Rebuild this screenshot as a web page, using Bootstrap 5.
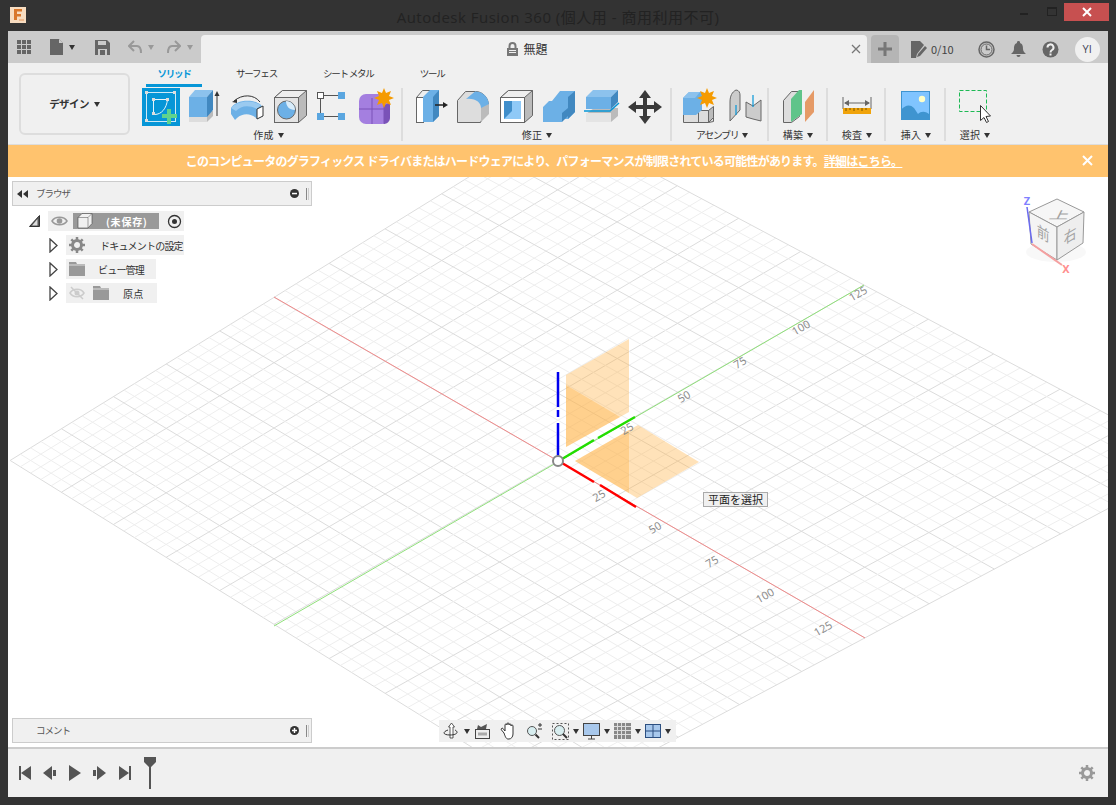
<!DOCTYPE html>
<html lang="ja">
<head>
  <meta charset="UTF-8">
  <meta name="viewport" content="width=device-width, initial-scale=1">
  <title>Autodesk Fusion 360</title>
  <link href="https://cdn.jsdelivr.net/npm/bootstrap@5.3.0/dist/css/bootstrap.min.css" rel="stylesheet">
  <style>
    html, body { height: 100%; overflow: hidden; }
    body { background: #333; font-family: "Noto Sans CJK JP", "Noto Sans", sans-serif; font-size: 10px; color: #333; }
    svg { display: block; flex: none; }
    .win { height: 805px; padding: 0 8px 8px; display: flex; flex-direction: column; }
    .titlebar { height: 31px; margin: 0 -8px; position: relative; flex: none; }
    .app-ico { position: absolute; left: 10px; top: 7px; }
    .win-title { padding-top: 5px; text-align: center; font-family: "Open Sans", "Noto Sans CJK JP", sans-serif; font-size: 15px; line-height: 24px; color: #222; letter-spacing: .5px; }
    .win-btns { position: absolute; right: 7px; top: 3px; }
    .win-close { width: 45px; height: 18px; background: #c75050; display: flex; align-items: center; justify-content: center; }
    .tabbar { height: 32px; background: #cbcbcb; flex: none; }
    .doc-tab { width: 666px; height: 28px; margin-top: 4px; margin-left: 193px; padding-right: 14px; background: #f0f0f0; border-radius: 4px 4px 0 0; position: relative; font-size: 12px; }
    .tab-x { position: absolute; right: 6px; top: 7px; }
    .plus-tab { width: 28px; height: 28px; margin: 4px 0 0 4px; background: #b5b5b5; border-radius: 4px 4px 0 0; }
    .left-tools { position: absolute; left: 9px; top: 8px; }
    .lt-caret1 { margin-left: 5px; margin-right: 20px; }
    .lt-undo { margin-left: 18px; }
    .lt-caret2 { margin-left: 6px; }
    .lt-redo { margin-left: 13px; }
    .right-tools { margin-left: 12px; margin-top: 4px; font-size: 11px; color: #444; }
    .caret-d { width: 0; height: 0; border-left: 3.5px solid transparent; border-right: 3.5px solid transparent; border-top: 5px solid #333; display: inline-block; }
    .caret-g { border-top-color: #999; }
    .avatar { width: 25px; height: 25px; border-radius: 50%; background: #f0f0f0; font-size: 11px; color: #445; font-family: "Open Sans", sans-serif; }
    .ribbon { height: 82px; background: #f0f0f0; border-bottom: 1px solid #ddd; padding-left: 11px; flex: none; }
    .design-btn { width: 111px; height: 62px; margin-top: 10px; border: 2px solid #ddd; border-radius: 6px; font-size: 10.5px; font-weight: 700; letter-spacing: -.6px; gap: 5px; }
    .tool-area { margin-left: 12px; }
    .tab-row { height: 25px; padding-left: 4px; font-size: 9.5px; letter-spacing: -1.2px; }
    .rtab { margin-right: 46px; padding-top: 3px; height: 24px; white-space: pre; }
    .rtab-on { width: 56px; margin-right: 34px; text-align: center; color: #0696d7; font-weight: 700; border-bottom: 3px solid #0696d7; }
    .rgroup { height: 53px; display: flex; flex-direction: column; align-items: center; border-right: 2px solid #ddd; }
    .rgroup.last { border-right: 0; }
    .g1 { padding-right: 6px; width: 261px; }
    .g2 { padding: 0 6px 0 7px; width: 269px; }
    .g3 { padding: 0 3px 0 8px; width: 97px; }
    .g4 { padding: 0 9px 0 10px; width: 59px; }
    .g5 { padding: 0 8px 0 10px; width: 58px; }
    .g6 { padding: 0 9px 0 11px; width: 60px; }
    .g7 { padding-left: 10px; width: 48px; }
    .icons-row { display: flex; height: 38px; gap: 5px; }
    .g3 .icons-row { gap: 8px; }
    .glabel { margin-top: 2px; font-size: 10px; line-height: 14px; gap: 4px; letter-spacing: .2px; white-space: nowrap; }
    .kana { letter-spacing: -1.4px; }
    .banner { height: 32px; background: #ffc36e; color: #fff; font-weight: 700; font-size: 12px; flex: none; position: relative; letter-spacing: -.78px; padding-right: 28px; }
    .banner a { color: #fff; }
    .banner-x { position: absolute; right: 15px; top: 10px; }
    .stage { height: 570px; background: #fff; position: relative; overflow: hidden; flex: none; }
    .stage-svg { position: absolute; left: 0; top: 0; }
    .panel { position: absolute; left: 4px; width: 300px; height: 25px; background: #f0f0f0; border: 1px solid #ccc; padding: 0 2px 0 23px; color: #555; font-size: 9.5px; letter-spacing: -1px; }
    .panel-top { top: 4px; }
    .panel-bottom { bottom: 4px; }
    .panel-rew { position: absolute; left: 4px; top: 8px; }
    .grip { width: 3px; height: 12px; border-left: 1px solid #888; border-right: 1px solid #ccc; margin-left: 7px; }
    .tree { position: absolute; left: 21px; top: 34px; gap: 4px; }
    .tree-row { height: 20px; display: flex; align-items: center; }
    .row-bg { background: #f0f0f0; height: 20px; display: flex; align-items: center; font-size: 10px; letter-spacing: -.8px; color: #333; }
    .bg-1 { width: 136px; margin-left: 8px; padding-left: 3px; }
    .bg-2 { width: 118px; margin-left: 8px; padding-left: 3px; }
    .bg-3 { width: 90px; margin-left: 8px; padding-left: 3px; }
    .bg-4 { width: 91px; margin-left: 8px; padding-left: 3px; }
    .sel-bar { width: 86px; height: 16px; background: #999; margin-left: 5px; color: #fff; font-weight: 700; display: flex; align-items: center; letter-spacing: .8px; }
    .lbl-doc { margin-left: 15px; white-space: nowrap; }
    .lbl-view { margin-left: 13px; white-space: nowrap; }
    .lbl-orig { margin-left: 14px; letter-spacing: .3px; }
    .nav-bar { position: absolute; left: 431px; bottom: 5px; width: 237px; height: 22px; background: #f0f0f0; padding-left: 4px; gap: 4px; }
    .nav-wide { margin-left: 5px; }
    .plane-tip { position: absolute; left: 695px; top: 315px; width: 65px; height: 15px; background: #f0f0f0; border: 1px solid #aaa; font-size: 11px; line-height: 13px; text-align: center; color: #222; }
    .timeline { height: 50px; background: #f0f0f0; border-top: 2px solid #ccc; padding: 0 13px 0 11px; flex: none; }
    .tl-btn { margin-left: 12px; }
    .tl-btn-w { margin-left: 13px; }
  </style>
</head>
<body>
<div class="win">
  <div class="titlebar">
    <svg class="app-ico" width="16" height="16" viewBox="0 0 16 16"><rect width="16" height="16" fill="#f7dcc0"/><path d="M4 2h8v2.500H7V7h4v2.500H7V13H4z" fill="#d9772b"/><rect x="9" y="12" width="5" height="2" fill="#eeb98c"/></svg>
    <div class="win-title">Autodesk Fusion 360 (個人用 - 商用利用不可)</div>
    <div class="win-btns d-flex align-items-start">
      <svg width="44" height="18" viewBox="0 0 44 18"><rect x="0" y="10" width="8" height="2" fill="#222"/><rect x="27.500" y="4.500" width="9" height="8" fill="none" stroke="#222"/><rect x="27" y="4" width="10" height="2" fill="#222"/></svg>
      <div class="win-close"><svg width="10" height="10" viewBox="0 0 10 10"><path d="M1 1l8 8M9 1l-8 8" stroke="#fff" stroke-width="2"/></svg></div>
    </div>
  </div>

  <div class="tabbar d-flex position-relative">
    <div class="left-tools d-flex align-items-center">
      <svg width="33" height="16" viewBox="0 0 33 16" fill="#666"><path d="M0 1h4v4H0zM5 1h4v4H5zM10 1h4v4h-4zM0 6h4v4H0zM5 6h4v4H5zM10 6h4v4h-4zM0 11h4v4H0zM5 11h4v4H5zM10 11h4v4h-4z"/></svg>
      <svg width="14" height="16" viewBox="0 0 14 16"><path d="M0 0h9l4 4v12H0z" fill="#666"/><path d="M9 0v4h4z" fill="#cbcbcb"/></svg>
      <span class="caret-d lt-caret1"></span>
      <svg width="15" height="15" viewBox="0 0 15 15"><path d="M0 0h12l3 3v12H0z" fill="#666"/><rect x="3" y="1" width="8" height="4" fill="#cbcbcb"/><rect x="3" y="9" width="9" height="6" fill="#cbcbcb"/><rect x="5" y="10" width="5" height="5" fill="#666"/></svg>
      <svg class="lt-undo" width="14" height="14" viewBox="0 0 14 14"><path d="M6 1L1 6l5 5M1 6h8c3 0 4 3 4 7" fill="none" stroke="#999" stroke-width="2"/></svg>
      <span class="caret-d caret-g lt-caret2"></span>
      <svg class="lt-redo" width="14" height="14" viewBox="0 0 14 14"><path d="M8 1l5 5-5 5M13 6H5c-3 0-4 3-4 7" fill="none" stroke="#999" stroke-width="2"/></svg>
      <span class="caret-d caret-g lt-caret2"></span>
    </div>
    <div class="doc-tab d-flex align-items-center justify-content-center">
      <svg class="me-1" width="13" height="14" viewBox="0 0 13 14"><path d="M3.500 6V4a3 3 0 0 1 6 0v2" fill="none" stroke="#777" stroke-width="2"/><rect x="1" y="6" width="11" height="8" fill="#777"/><path d="M3 8.500h7M3 10.500h7" stroke="#f0f0f0"/></svg>
      <span>無題</span>
      <svg class="tab-x" width="10" height="14" viewBox="0 0 10 14"><path d="M1 3l8 8M9 3l-8 8" stroke="#777" stroke-width="1.300"/></svg>
    </div>
    <div class="plus-tab d-flex align-items-center justify-content-center">
      <svg width="14" height="14" viewBox="0 0 14 14"><path d="M7 0v14M0 7h14" stroke="#777" stroke-width="3"/></svg>
    </div>
    <div class="right-tools d-flex align-items-center">
      <svg width="16" height="17" viewBox="0 0 16 17"><path d="M0 0h9l4 4-7 9-1 4H0z" fill="#666"/><path d="M7 13l7-8 2 2-7 8-3 1z" fill="#666"/></svg>
      <span class="ms-1">0/10</span>
      <svg class="ms-4" width="17" height="17" viewBox="0 0 17 17"><circle cx="8.500" cy="8.500" r="7.500" fill="none" stroke="#666" stroke-width="1.500"/><circle cx="8.500" cy="8.500" r="5.500" fill="none" stroke="#666"/><path d="M8.500 4.500v4h3.500" fill="none" stroke="#666" stroke-width="1.500"/></svg>
      <svg class="ms-3" width="15" height="17" viewBox="0 0 15 17"><path d="M7.500 0a1.500 1.500 0 0 1 1.500 2c3 1 3 4 3 6s1 3 3 5H0c2-2 3-3 3-5s0-5 3-6a1.500 1.500 0 0 1 1.500-2zM5.500 14h4a2 2 0 0 1-4 0z" fill="#666"/></svg>
      <svg class="ms-3" width="17" height="17" viewBox="0 0 17 17"><circle cx="8.500" cy="8.500" r="8" fill="#666"/><path d="M5.500 6.500a3 3 0 1 1 4.500 2.500c-1 .6-1.500 1-1.500 2.500" fill="none" stroke="#f0f0f0" stroke-width="2"/><rect x="7.500" y="12.500" width="2" height="2" fill="#f0f0f0"/></svg>
      <div class="avatar ms-3 d-flex align-items-center justify-content-center">YI</div>
    </div>
  </div>

  <div class="ribbon d-flex">
    <div class="design-btn d-flex align-items-center justify-content-center"><span>デザイン</span><span class="caret-d"></span></div>
    <div class="tool-area">
      <div class="tab-row d-flex">
        <div class="rtab rtab-on">ソリッド</div>
        <div class="rtab">サーフェス</div>
        <div class="rtab">シート メタル</div>
        <div class="rtab">ツール</div>
      </div>
      <div class="d-flex">
        <div class="rgroup g1">
          <div class="icons-row">
            <svg width="38" height="38" viewBox="0 0 38 38"><rect width="38" height="38" fill="#0696d7"/><rect x="4.500" y="4.500" width="29" height="29" fill="none" stroke="#cfeaf7"/><rect x="3" y="3" width="3" height="3" fill="#ddd"/><rect x="31" y="3" width="3" height="3" fill="#ddd"/><rect x="3" y="31" width="3" height="3" fill="#ddd"/><path d="M11.500 11.500v15h1c7 0 12-6 13-15z" fill="none" stroke="#e6f5fc"/><rect x="10" y="10" width="3" height="3" fill="#ddd"/><rect x="10" y="24" width="3" height="3" fill="#ddd"/><rect x="24" y="10" width="3" height="3" fill="#ddd"/><path d="M25 21h4v5h6v4h-6v6h-4v-6h-5v-4h5z" fill="#5fd38d"/></svg>
            <svg width="38" height="38" viewBox="0 0 38 38"><path d="M4 29l6-6h18v5l-6 6H4z" fill="#bbb"/><rect x="4" y="29" width="18" height="5" fill="#ddd"/><path d="M4 9l6-7h18l-6 7z" fill="#8cc2ed"/><rect x="4" y="9" width="18" height="20" fill="#6cb0e6"/><path d="M22 9l6-7v20l-6 7z" fill="#4188c0"/><path d="M32 28V5" stroke="#333"/><path d="M29.500 8L32 3l2.500 5z" fill="#333"/></svg>
            <svg width="38" height="38" viewBox="0 0 38 38"><path d="M3 20c4-8 22-10 30-3l2 3v8l-6 3c-6-6-14-6-20-1l-2 2-4-6z" fill="#6cb0e6"/><path d="M3 20c6-7 20-9 30-3l-4 4C22 17 13 17 8 23z" fill="#9acaf0"/><path d="M29 21l6-3v10l-6 3z" fill="#fff" stroke="#333"/><path d="M6 13c8-7 20-7 26 1" fill="none" stroke="#333"/><path d="M4 14l5-3 0 4z" fill="#333"/></svg>
            <svg width="38" height="38" viewBox="0 0 38 38"><path d="M3.500 9.500l8-7h24v25l-8 7z" fill="#bbb" stroke="#666"/><path d="M3.500 9.500l8-7h24l-8 7z" fill="#eee" stroke="#666"/><rect x="3.500" y="9.500" width="24" height="25" fill="#e4e4e4" stroke="#666"/><circle cx="15.500" cy="22" r="9" fill="#6cb0e6" stroke="#666"/><path d="M15 13c0 5 3 9 9 9 0-5-4-9-9-9z" fill="#d8ecfa"/></svg>
            <svg width="38" height="38" viewBox="0 0 38 38"><path d="M10 7.500h14M6.500 11v14M10 28.500h14" stroke="#555"/><rect x="3.500" y="4.500" width="6" height="6" fill="#fff" stroke="#555"/><rect x="24" y="4" width="7" height="7" fill="#5aa6e0"/><rect x="3" y="25" width="7" height="7" fill="#5aa6e0"/><rect x="24" y="25" width="7" height="7" fill="#5aa6e0"/></svg>
            <svg width="38" height="38" viewBox="0 0 38 38"><rect x="2" y="6" width="30" height="30" rx="7" fill="#a47fe0"/><path d="M27 17l6-2v15c0 3-3 6-6 6z" fill="#7a52b8"/><path d="M2 21h25M15 10v26M27 8v28" stroke="#7a52b8"/><path d="M27 0l2 5 5-2-2 5 5 2-5 2 2 5-5-2-2 5-2-5-5 2 2-5-5-2 5-2-2-5 5 2z" fill="#f59b00"/></svg>
          </div>
          <div class="glabel d-flex align-items-center"><span>作成</span><span class="caret-d"></span></div>
        </div>
        <div class="rgroup g2">
          <div class="icons-row">
            <svg width="38" height="38" viewBox="0 0 38 38"><rect x="5.500" y="9.500" width="7" height="25" fill="#fff" stroke="#666"/><path d="M5.500 9.500l6-7h8l-7 7z" fill="#eee" stroke="#666"/><path d="M12 9l7-7h9v26l-6 6H12z" fill="#6cb0e6"/><path d="M22 9l6-7v26l-6 6z" fill="#4188c0"/><path d="M24 17h9" stroke="#222" stroke-width="1.500"/><path d="M32 14l5 3-5 3z" fill="#222"/></svg>
            <svg width="38" height="38" viewBox="0 0 38 38"><path d="M3.500 34.500v-22l8-9h10c7 0 13 6 13 14l-8 17z" fill="#ddd" stroke="#666"/><path d="M21 3.500c8 0 14 6 14 14v6l-8 9V20c0-5-5-10-15-9z" fill="#6cb0e6"/><path d="M27 20l8-4v10l-8 8z" fill="#bbb"/></svg>
            <svg width="38" height="38" viewBox="0 0 38 38"><path d="M3.500 9.500l8-7h24v25l-8 7z" fill="#bbb" stroke="#666"/><path d="M3.500 9.500l8-7h24l-8 7z" fill="#eee" stroke="#666"/><rect x="3.500" y="9.500" width="24" height="25" fill="#fff" stroke="#666"/><rect x="7" y="13" width="17" height="18" fill="#8fc9f7"/><path d="M7 13h8v10H7zM7 23h8l-8 8z" fill="#3f8ecb"/></svg>
            <svg width="38" height="38" viewBox="0 0 38 38"><path d="M12 13l8-10h15v21l-7 7H20V13z" fill="#6cb0e6"/><path d="M28 9l7-6v21l-7 7z" fill="#4188c0"/><path d="M3 19l6-6h11v7H9v14H3z" fill="#6cb0e6"/><rect x="3" y="19" width="19" height="15" fill="#6cb0e6"/><path d="M22 25l6-5v8l-6 6z" fill="#4188c0"/></svg>
            <svg width="38" height="38" viewBox="0 0 38 38"><path d="M3 26l8-6h24v8l-7 6H3z" fill="#bbb"/><rect x="3" y="25" width="25" height="9" fill="#e4e4e4"/><path d="M3 9l7-7h25l-7 7z" fill="#8cc2ed"/><rect x="3" y="9" width="25" height="12" fill="#6cb0e6"/><path d="M28 9l7-7v12l-7 7z" fill="#4188c0"/><path d="M1 23h26l9-8" fill="none" stroke="#0696d7" stroke-width="1.500"/></svg>
            <svg width="38" height="38" viewBox="0 0 38 38"><path d="M19 2l6 8h-4v7h7v-4l8 6-8 6v-4h-7v7h4l-6 8-6-8h4v-7h-7v4l-8-6 8-6v4h7v-7h-4z" fill="#3a3a3a"/></svg>
          </div>
          <div class="glabel d-flex align-items-center"><span>修正</span><span class="caret-d"></span></div>
        </div>
        <div class="rgroup g3">
          <div class="icons-row">
            <svg width="38" height="38" viewBox="0 0 38 38"><path d="M3.500 22.500h30v11l-5 1h-25z" fill="#ddd" stroke="#666"/><path d="M18.500 22.500v12" stroke="#666"/><path d="M28.500 22.500l5-4v11l-5 5z" fill="#bbb" stroke="#666"/><path d="M3 10l6-6h13v18l-6 5H3z" fill="#6cb0e6"/><path d="M3 10l6-6h11l-5 6z" fill="#8cc2ed"/><path d="M27 0l2 5 5-2-2 5 5 2-5 2 2 5-5-2-2 5-2-5-5 2 2-5-5-2 5-2-2-5 5 2z" fill="#f59b00"/></svg>
            <svg width="38" height="38" viewBox="0 0 38 38"><path d="M4 14c0-6 2-10 6-12 3 0 4 3 4 5v15l-10 11z" fill="#ccc" stroke="#666"/><path d="M20 14l7 4 8-6v21l-8-2-7-2z" fill="#ccc" stroke="#666"/><path d="M10 17v10" stroke="#0696d7" stroke-width="1.200"/><path d="M27 7v12" stroke="#0696d7" stroke-width="1.200"/></svg>
          </div>
          <div class="glabel d-flex align-items-center"><span class="kana">アセンブリ</span><span class="caret-d"></span></div>
        </div>
        <div class="rgroup g4">
          <div class="icons-row">
            <svg width="38" height="38" viewBox="0 0 38 38"><path d="M4.500 12.500l8-9h8v25l-8 6h-8z" fill="#ddd" stroke="#666"/><path d="M12 11l8-9 3 0v24l-11 8z" fill="#5fc48a"/><path d="M26 14l9-12v22l-9 10z" fill="#e59a66"/></svg>
          </div>
          <div class="glabel d-flex align-items-center"><span>構築</span><span class="caret-d"></span></div>
        </div>
        <div class="rgroup g5">
          <div class="icons-row">
            <svg width="38" height="38" viewBox="0 0 38 38"><path d="M5 9v12M33 9v12M7 15h24" stroke="#666"/><path d="M6 15l5-3v6zM32 15l-5-3v6z" fill="#666"/><rect x="5" y="20" width="28" height="6" fill="#f0a30a"/><path d="M8 20v3M12 20v2M16 20v3M20 20v2M24 20v3M28 20v2" stroke="#7a5600"/></svg>
          </div>
          <div class="glabel d-flex align-items-center"><span>検査</span><span class="caret-d"></span></div>
        </div>
        <div class="rgroup g6">
          <div class="icons-row">
            <svg width="38" height="38" viewBox="0 0 38 38"><rect x="4" y="3" width="29" height="29" fill="#80c4ff"/><path d="M4 32V22c4-5 9-6 13-2l4 6c3-3 8-3 12 1v5z" fill="#3f94d0"/><circle cx="25" cy="11" r="3.200" fill="#ffffc8"/><rect x="4.500" y="3.500" width="28" height="28" fill="none" stroke="#3f94d0"/></svg>
          </div>
          <div class="glabel d-flex align-items-center"><span>挿入</span><span class="caret-d"></span></div>
        </div>
        <div class="rgroup g7 last">
          <div class="icons-row">
            <svg width="38" height="38" viewBox="0 0 38 38"><rect x="3.500" y="2.500" width="27" height="21" fill="none" stroke="#1db954" stroke-dasharray="4 2"/><path d="M24.500 17.500v15l3.500-3 2.500 5 2-1-2.500-5 4.500-.5z" fill="#fff" stroke="#333"/></svg>
          </div>
          <div class="glabel d-flex align-items-center"><span>選択</span><span class="caret-d"></span></div>
        </div>
      </div>
    </div>
  </div>

  <div class="banner d-flex align-items-center justify-content-center">
    <span>このコンピュータのグラフィックス ドライバまたはハードウェアにより、パフォーマンスが制限されている可能性があります。<a href="#">詳細はこちら。</a></span>
    <svg class="banner-x" width="11" height="11" viewBox="0 0 11 11"><path d="M1 1l9 9M10 1l-9 9" stroke="#fff" stroke-width="2"/></svg>
  </div>

  <div class="stage">
    <svg id="grid" class="stage-svg" width="1100" height="570" viewBox="8 177 1100 570">
      <g id="gridLines" fill="none"></g>
      <path d="M274 297L865 638" stroke="#f08a8a" fill="none"/>
      <path d="M274 626L864 285" stroke="#8fe07a" fill="none"/>
      <g fill="#ffb347" fill-opacity=".38">
        <path d="M566 375L629 339V412L566 447z"/>
        <path d="M566 385L620 417 566 447z"/>
        <path d="M575 461L638 425 699 462 637 498z"/>
        <path d="M575 461L629 430V493z"/>
      </g>
      <g fill="none" stroke-width="2.500">
        <path d="M558 372V407M558 410V417M558 423V457" stroke="#0000ee"/>
        <path d="M562 459L594 440M598 438L635 417" stroke="#22dd00"/>
        <path d="M562 463L594 482M600 485L636 507" stroke="#f00"/>
      </g>
      <circle cx="558" cy="461" r="5" fill="#fff" stroke="#888" stroke-width="2"/>
      <g id="axisLabels" font-family="Open Sans, sans-serif" font-size="11" fill="#888" text-anchor="middle"></g>
      <ellipse cx="1056" cy="252" rx="30" ry="10" fill="#f8f8f8"/>
      <path d="M1029 212L1057 199 1084 212 1057 227z" fill="#f6f6f6" stroke="#999"/>
      <path d="M1029 212L1057 227V260L1031 244z" fill="#f4f4f4" stroke="#999"/>
      <path d="M1057 227L1084 212 1083 243 1057 260z" fill="#eeeeee" stroke="#999"/>
      <g font-family="Noto Sans CJK JP, sans-serif" fill="#a2a2a2" font-size="15">
        <text transform="matrix(1.300 0 -.35 .7 1058 219)" text-anchor="middle">上</text>
        <text transform="matrix(.85 .5 0 1 1043 239)" text-anchor="middle">前</text>
        <text transform="matrix(.85 -.5 0 1 1070 241)" text-anchor="middle">右</text>
      </g>
      <path d="M1027 207L1032 243" stroke="#6a6af0" stroke-width="1.500" fill="none"/>
      <path d="M1032 244L1062 265" stroke="#f5a0a0" stroke-width="2" fill="none"/>
      <text x="1027" y="205" font-family="Noto Sans, sans-serif" font-size="11" font-weight="700" fill="#8080ff" text-anchor="middle">Z</text>
      <text x="1066" y="273" font-family="Noto Sans, sans-serif" font-size="11" font-weight="700" fill="#ff8f8f" text-anchor="middle">X</text>
    </svg>

    <div class="panel panel-top d-flex align-items-center justify-content-between">
      <svg class="panel-rew" width="11" height="8" viewBox="0 0 11 8"><path d="M5 0v8L0 4zM11 0v8L6 4z" fill="#333"/></svg>
      <span>ブラウザ</span>
      <span class="d-flex align-items-center">
        <svg width="9" height="9" viewBox="0 0 9 9"><circle cx="4.500" cy="4.500" r="4.500" fill="#333"/><rect x="2" y="3.800" width="5" height="1.500" fill="#fff"/></svg>
        <span class="grip"></span>
      </span>
    </div>

    <div class="tree d-flex flex-column">
      <div class="tree-row">
        <svg width="11" height="12" viewBox="0 0 11 12"><path d="M10.500 .5v11H.5z" fill="#555" stroke="#333"/><path d="M8.500 4v6.500H3z" fill="#ddd"/></svg>
        <div class="row-bg bg-1">
          <svg width="17" height="12" viewBox="0 0 17 12"><path d="M1 6c3-5 12-5 15 0-3 5-12 5-15 0z" fill="none" stroke="#999" stroke-width="1.500"/><circle cx="8.500" cy="6" r="2.800" fill="#999"/></svg>
          <div class="sel-bar">
            <svg class="ms-1" width="17" height="16" viewBox="0 0 17 16"><path d="M1 4.500l4-4h10v10l-4 4.500H1z" fill="#f0f0f0" stroke="#444" stroke-width=".6"/><path d="M1 4.500h10v10.500M11 4.500l4-4" fill="none" stroke="#666" stroke-width=".6"/></svg>
            <span class="ms-2 ps-1">(未保存)</span>
          </div>
          <svg class="ms-2" width="15" height="15" viewBox="0 0 15 15"><circle cx="7.500" cy="7.500" r="6" fill="none" stroke="#333" stroke-width="1.300"/><circle cx="7.500" cy="7.500" r="2.500" fill="#333"/></svg>
        </div>
      </div>
      <div class="tree-row ms-3 ps-1">
        <svg width="9" height="15" viewBox="0 0 9 15"><path d="M1 1l7 6.500L1 14z" fill="#fff" stroke="#444" stroke-width="1.300"/></svg>
        <div class="row-bg bg-2">
          <svg width="16" height="16" viewBox="0 0 16 16"><circle cx="8" cy="8" r="4.500" fill="none" stroke="#888" stroke-width="3"/><path d="M8 0v3M8 13v3M0 8h3M13 8h3M2.300 2.300l2.100 2.100M11.600 11.600l2.100 2.100M2.300 13.700l2.100-2.100M11.600 4.400l2.100-2.100" stroke="#888" stroke-width="2.500"/></svg>
          <span class="lbl-doc">ドキュメントの設定</span>
        </div>
      </div>
      <div class="tree-row ms-3 ps-1">
        <svg width="9" height="15" viewBox="0 0 9 15"><path d="M1 1l7 6.500L1 14z" fill="#fff" stroke="#444" stroke-width="1.300"/></svg>
        <div class="row-bg bg-3">
          <svg width="16" height="14" viewBox="0 0 16 14"><path d="M0 0h7l1 2h8v12H0z" fill="#999"/><path d="M0 3h16" stroke="#ddd"/></svg>
          <span class="lbl-view">ビュー管理</span>
        </div>
      </div>
      <div class="tree-row ms-3 ps-1">
        <svg width="9" height="15" viewBox="0 0 9 15"><path d="M1 1l7 6.500L1 14z" fill="#fff" stroke="#444" stroke-width="1.300"/></svg>
        <div class="row-bg bg-4">
          <svg width="16" height="14" viewBox="0 0 16 14"><path d="M1 7c3-5 11-5 14 0-3 5-11 5-14 0z" fill="none" stroke="#ccc" stroke-width="1.500"/><circle cx="8" cy="7" r="2.500" fill="#ccc"/><path d="M2 1l12 12" stroke="#ccc" stroke-width="1.500"/></svg>
          <svg class="ms-2" width="16" height="14" viewBox="0 0 16 14"><path d="M0 0h7l1 2h8v12H0z" fill="#999"/><path d="M0 3h16" stroke="#ddd"/></svg>
          <span class="lbl-orig">原点</span>
        </div>
      </div>
    </div>

    <div class="panel panel-bottom d-flex align-items-center justify-content-between">
      <span>コメント</span>
      <span class="d-flex align-items-center">
        <svg width="9" height="9" viewBox="0 0 9 9"><circle cx="4.500" cy="4.500" r="4.500" fill="#333"/><path d="M2 4.500h5M4.500 2v5" stroke="#fff" stroke-width="1.400"/></svg>
        <span class="grip"></span>
      </span>
    </div>

    <div class="plane-tip">平面を選択</div>

    <div class="nav-bar d-flex align-items-center">
      <svg width="17" height="18" viewBox="0 0 17 18"><path d="M8.500 1l3 4H10v11H7V5H5.500z" fill="#fff" stroke="#333" stroke-width=".8"/><path d="M5 8c-6 2-5 5 2 5s9-3 5-5" fill="none" stroke="#333"/></svg>
      <span class="caret-d"></span>
      <svg width="17" height="16" viewBox="0 0 17 16"><rect x="1.500" y="6.500" width="14" height="9" fill="#eee" stroke="#444"/><rect x="4" y="9.500" width="9" height="3" fill="#aaa"/><path d="M3 6l1-4 3 2 4-2 2-1-1 5z" fill="#555"/></svg>
      <svg class="nav-wide" width="17" height="18" viewBox="0 0 17 18"><path d="M4 11L1.500 8c-1-1 .5-2.500 1.500-1.500L5 9V3c0-1.500 2-1.500 2 0V2c0-1.500 2-1.500 2 0v1c0-1.500 2-1.500 2 0v1c0-1.500 2-1.500 2 0v8c0 3-2 5-4 5H8c-2 0-3-3-4-6z" fill="#fff" stroke="#333"/></svg>
      <svg class="nav-wide" width="17" height="16" viewBox="0 0 17 16"><circle cx="6" cy="8" r="4.500" fill="#d8eef0" stroke="#555"/><path d="M9.500 11.500l3.500 3.500" stroke="#333" stroke-width="2"/><path d="M12 2h4M14 0v4M12 6h4" stroke="#333"/></svg>
      <svg class="nav-wide" width="17" height="17" viewBox="0 0 17 17"><rect x=".5" y=".5" width="16" height="16" fill="none" stroke="#555" stroke-dasharray="2 2"/><circle cx="7.500" cy="7.500" r="5" fill="#d8eef0" stroke="#555"/><path d="M11 11l4 4" stroke="#333" stroke-width="2"/></svg>
      <span class="caret-d"></span>
      <svg width="17" height="17" viewBox="0 0 17 17"><rect x=".5" y=".5" width="16" height="12" fill="#a8c8ec" stroke="#444"/><path d="M5 16h7M8.500 13v3" stroke="#444"/></svg>
      <span class="caret-d"></span>
      <svg width="17" height="16" viewBox="0 0 17 16"><rect width="17" height="16" fill="#888"/><path d="M3.500 0v16M7.500 0v16M11.500 0v16M0 3.500h17M0 7.500h17M0 11.500h17" stroke="#ddd"/></svg>
      <span class="caret-d"></span>
      <svg width="16" height="14" viewBox="0 0 16 14"><rect x=".5" y=".5" width="15" height="13" fill="#a8c8ec" stroke="#2c4f80"/><path d="M8 0v14M0 7h16" stroke="#2c4f80"/></svg>
      <span class="caret-d"></span>
    </div>
  </div>

  <div class="timeline d-flex align-items-center justify-content-between">
    <div class="d-flex align-items-center">
      <svg width="12" height="14" viewBox="0 0 12 14" fill="#555"><rect width="2" height="14"/><path d="M12 0v14L2 7z"/></svg>
      <svg class="tl-btn" width="13" height="14" viewBox="0 0 13 14" fill="#555"><path d="M9 0v14L0 7z"/><rect x="10" y="4" width="3" height="6"/></svg>
      <svg class="tl-btn-w" width="12" height="16" viewBox="0 0 12 16" fill="#555"><path d="M0 0v16l12-8z"/></svg>
      <svg class="tl-btn" width="13" height="14" viewBox="0 0 13 14" fill="#555"><path d="M4 0v14l9-7z"/><rect y="4" width="3" height="6"/></svg>
      <svg class="tl-btn-w" width="12" height="14" viewBox="0 0 12 14" fill="#555"><rect x="10" width="2" height="14"/><path d="M0 0v14l10-7z"/></svg>
      <svg class="tl-btn-w" width="12" height="32" viewBox="0 0 12 32" fill="#555"><path d="M0 0h12v5L7 10v22H5V10L0 5z"/></svg>
    </div>
    <svg width="16" height="16" viewBox="0 0 16 16"><circle cx="8" cy="8" r="4.500" fill="none" stroke="#999" stroke-width="3"/><path d="M8 0v3M8 13v3M0 8h3M13 8h3M2.300 2.300l2.100 2.100M11.600 11.600l2.100 2.100M2.300 13.700l2.100-2.100M11.600 4.400l2.100-2.100" stroke="#999" stroke-width="2.500"/></svg>
  </div>
</div>

<script>
  // ground grid, slight perspective fitted to the two axis lines
  var NS = "http://www.w3.org/2000/svg";
  var g = -0.0389, h = -0.0373;
  function project(u, v) {
    var w = 1 + g * u + h * v;
    return [558 + (295 * u + 294.6 * v) / w, 461 + (170 * u - 169.4 * v) / w];
  }
  var gridLines = document.getElementById("gridLines");
  var divs = 25;
  for (var i = -divs; i <= divs; i++) {
    var t = i / divs;
    var major = i % 5 === 0;
    [[[t, -1], [t, 1]], [[-1, t], [1, t]]].forEach(function (seg) {
      var a = project(seg[0][0], seg[0][1]);
      var b = project(seg[1][0], seg[1][1]);
      var line = document.createElementNS(NS, "line");
      line.setAttribute("x1", a[0]); line.setAttribute("y1", a[1]);
      line.setAttribute("x2", b[0]); line.setAttribute("y2", b[1]);
      line.setAttribute("stroke", major ? "#dcdcdc" : "#eeeeee");
      gridLines.appendChild(line);
    });
  }
  var labels = [["25", 601, 495], ["50", 657, 527], ["75", 714, 561], ["100", 767, 595], ["125", 825, 628],
                ["25", 629, 428], ["50", 686, 396], ["75", 742, 362], ["100", 803, 327], ["125", 860, 293]];
  var labelGroup = document.getElementById("axisLabels");
  labels.forEach(function (l) {
    var t = document.createElementNS(NS, "text");
    t.setAttribute("transform", "translate(" + l[1] + " " + (l[2] + 4) + ") rotate(-30)");
    t.textContent = l[0];
    labelGroup.appendChild(t);
  });
</script>
<script src="https://cdn.jsdelivr.net/npm/bootstrap@5.3.0/dist/js/bootstrap.bundle.min.js"></script>
</body>
</html>
